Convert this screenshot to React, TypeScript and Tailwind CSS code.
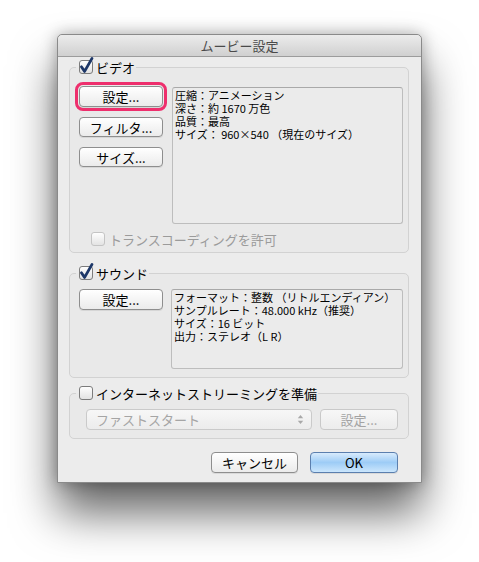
const FONT = { fontFamily: '"Noto Sans CJK JP", "Noto Sans", sans-serif' };

function CheckBox({ checked = false, disabled = false }: { checked?: boolean; disabled?: boolean }) {
  return (
    <svg width="14" height="14" viewBox="0 0 14 14" className="shrink-0 overflow-visible">
      <defs>
        <linearGradient id="cbg" x1="0" y1="0" x2="0" y2="1">
          <stop offset="0" stopColor="#ffffff" />
          <stop offset="1" stopColor="#e2e2e2" />
        </linearGradient>
      </defs>
      <rect
        x="0.5"
        y="0.5"
        width="13"
        height="13"
        rx="2.5"
        fill="url(#cbg)"
        stroke={disabled ? "#c4c4c4" : "#7c7c7c"}
      />
      {checked && (
        <path
          d="M2.4 6.8 L5.6 11.4 L13 -1.6"
          fill="none"
          stroke="#1d3768"
          strokeWidth="2.8"
          strokeLinecap="round"
          strokeLinejoin="round"
        />
      )}
    </svg>
  );
}

function Button({
  children,
  className = "",
  disabled = false,
}: {
  children: React.ReactNode;
  className?: string;
  disabled?: boolean;
}) {
  return (
    <button
      className={`flex items-center justify-center rounded-[4px] border text-[13px] leading-none ${
        disabled
          ? "border-[#c9c9c9] bg-gradient-to-b from-[#f7f7f7] to-[#ececec] text-[#a3a3a3]"
          : "border-[#8e8e8e] bg-gradient-to-b from-[#ffffff] to-[#ebebeb] text-black shadow-[0_1px_0_rgba(0,0,0,0.08)]"
      } ${className}`}
    >
      {children}
    </button>
  );
}

function InfoBox({ lines, className = "" }: { lines: string[]; className?: string }) {
  return (
    <div
      className={`rounded-[3px] border border-[#bdbdbd] border-t-[#a9a9a9] bg-[#ebebeb] px-[2px] pt-[1px] text-[11px] leading-[13px] text-black ${className}`}
    >
      {lines.map((l) => (
        <div key={l} className="whitespace-pre">
          {l}
        </div>
      ))}
    </div>
  );
}

function Group({
  legend,
  checked,
  children,
  className = "",
}: {
  legend: string;
  checked: boolean;
  children: React.ReactNode;
  className?: string;
}) {
  return (
    <fieldset
      className={`ml-[11px] mr-[12px] rounded-[5px] border border-[#d2d2d2] bg-[#e9e9e9] pl-[6px] ${className}`}
    >
      <legend className="flex h-[14px] items-center gap-[3px] pl-[3px] pr-[1px] text-[13px] leading-none text-black">
        <CheckBox checked={checked} />
        <span>{legend}</span>
      </legend>
      {children}
    </fieldset>
  );
}

export default function App() {
  return (
    <div className="h-[562px] w-full overflow-hidden bg-white" style={FONT}>
      <div className="ml-[57px] mt-[34px] flex h-[449px] w-[365px] flex-col rounded-t-[5px] border border-[#8a8a8a] bg-[#ececec] shadow-[0_30px_45px_rgba(0,0,0,0.6),0_0_16px_rgba(0,0,0,0.3)]">
        {/* タイトルバー */}
        <div className="flex h-[22px] shrink-0 items-center justify-center rounded-t-[5px] border-b border-[#9c9c9c] bg-gradient-to-b from-[#ececec] to-[#d0d0d0] text-[13px] text-[#4a4a4a]">
          ムービー設定
        </div>

        <div className="pt-[3px]">
          {/* ビデオ */}
          <Group legend="ビデオ" checked>
            <div className="mt-[12px] flex pl-[3px]">
              <div className="flex w-[84px] flex-col gap-[10px]">
                <Button className="h-[21px] outline outline-[3.5px] outline-offset-[1px] outline-[#ee2f6d]">
                  設定...
                </Button>
                <Button className="h-[20px]">フィルタ...</Button>
                <Button className="h-[20px]">サイズ...</Button>
              </div>
              <InfoBox
                className="ml-[9px] mt-[1px] h-[137px] w-[231px]"
                lines={[
                  "圧縮：アニメーション",
                  "深さ：約 1670 万色",
                  "品質：最高",
                  "サイズ： 960×540 （現在のサイズ）",
                ]}
              />
            </div>
            <div className="mt-[8px] mb-[6px] flex items-center gap-[4px] pl-[15px] text-[13px] leading-none text-[#9b9b9b]">
              <CheckBox disabled />
              <span>トランスコーディングを許可</span>
            </div>
          </Group>

          {/* サウンド */}
          <Group legend="サウンド" checked className="mt-[13px]">
            <div className="mt-[9px] mb-[8px] flex pl-[3px]">
              <Button className="h-[21px] w-[84px]">設定...</Button>
              <InfoBox
                className="ml-[8px] h-[80px] w-[232px]"
                lines={[
                  "フォーマット：整数 （リトルエンディアン）",
                  "サンプルレート：48.000 kHz（推奨）",
                  "サイズ：16 ビット",
                  "出力：ステレオ（L R）",
                ]}
              />
            </div>
          </Group>

          {/* インターネットストリーミング */}
          <Group legend="インターネットストリーミングを準備" checked={false} className="mt-[8px]">
            <div className="mt-[9px] mb-[8px] flex gap-[8px] pl-[10px]">
              <div className="flex h-[21px] w-[226px] items-center justify-between rounded-[4px] border border-[#cacaca] bg-gradient-to-b from-[#f7f7f7] to-[#ececec] pl-[9px] pr-[7px] text-[13px] leading-none text-[#a5a5a5]">
                <span>ファストスタート</span>
                <svg width="7" height="11" viewBox="0 0 7 11">
                  <path d="M3.5 1 L6.2 4.2 H0.8 Z" fill="#a8a8a8" />
                  <path d="M3.5 10 L6.2 6.8 H0.8 Z" fill="#a8a8a8" />
                </svg>
              </div>
              <Button disabled className="h-[21px] w-[78px]">
                設定...
              </Button>
            </div>
          </Group>

          {/* ボタン */}
          <div className="mr-[23px] mt-[13px] flex justify-end gap-[12px]">
            <Button className="h-[21px] w-[87px]">キャンセル</Button>
            <button className="flex h-[21px] w-[88px] items-center justify-center rounded-[4px] border border-[#5b7fae] bg-gradient-to-b from-[#d8ebfc] via-[#9dccf6] to-[#cbe6fc] text-[13px] leading-none text-black shadow-[0_1px_0_rgba(0,0,0,0.08)]">
              OK
            </button>
          </div>
        </div>
      </div>
    </div>
  );
}
